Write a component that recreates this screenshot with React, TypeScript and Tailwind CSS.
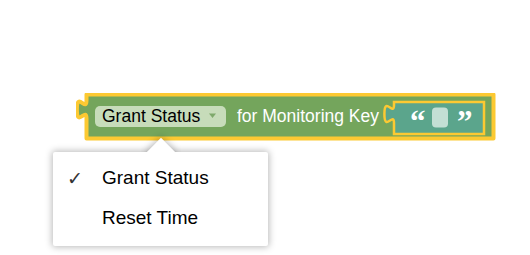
import React from 'react';

const GREEN = '#74a55c';
const TEAL = '#5ba58c';
const HIGHLIGHT = '#fcc932';

// output-tab going up, scaled 1.2 from blockly's default
const TAB_UP = 'c 0,-12 -9.6,9.6 -9.6,-9 s 9.6,3 9.6,-9';

const GrantStatusBlock: React.FC = () => (
  <svg width="424" height="50" viewBox="0 0 424 50" className="block">
    <path
      d={`M 10.5,1.5 H 417.5 V 45.5 H 10.5 V 25.5 ${TAB_UP} V 1.5 z`}
      fill={GREEN}
      stroke={HIGHLIGHT}
      strokeWidth="4"
      strokeLinejoin="round"
    />
    {/* dropdown field */}
    <rect x="19" y="13" width="131" height="21" rx="5" fill="#c7dcba" />
    <text x="26" y="29" fontSize="17.5" fill="#000" fontFamily='"Liberation Sans", Arial, sans-serif'>
      Grant Status
    </text>
    <polygon points="133,20.5 140,20.5 136.5,25" fill="#7ea96b" />
    <text x="161" y="29" fontSize="17.5" fill="#fff" fontFamily='"Liberation Sans", Arial, sans-serif'>
      for Monitoring Key
    </text>
    {/* text shadow block */}
    <path
      d={`M 318,9 H 408 V 41 H 318 V 30 ${TAB_UP} V 9 z`}
      fill={TEAL}
      stroke={HIGHLIGHT}
      strokeWidth="2.5"
    />
    <text x="334" y="39" fontSize="31" fontWeight="bold" fill="#fff" fontFamily='"Liberation Serif", "Times New Roman", serif'>
      “
    </text>
    <rect x="356" y="14.5" width="16" height="20" rx="4" fill="#c3dfd4" />
    <text x="381" y="39" fontSize="31" fontWeight="bold" fill="#fff" fontFamily='"Liberation Serif", "Times New Roman", serif'>
      ”
    </text>
  </svg>
);

const options = [
  { label: 'Grant Status', checked: true },
  { label: 'Reset Time', checked: false },
];

const DropdownMenu: React.FC = () => (
  <>
    <div className="absolute left-[53px] top-[152px] w-[215px] h-[94px] bg-white rounded-[2px] shadow-[0_0_7px_1px_rgba(0,0,0,0.28)] pt-[6px]">
      {options.map((opt) => (
        <div key={opt.label} className="h-[40px] flex items-center pl-[14px] text-[19px] text-black">
          <span className="w-[35px] text-[19px] text-[#333] font-['DejaVu_Sans',sans-serif]">
            {opt.checked ? '✓' : ''}
          </span>
          <span>{opt.label}</span>
        </div>
      ))}
    </div>
    {/* pointer of the menu, clipped to the part above the box */}
    <div className="absolute left-[141px] top-[128px] w-[40px] h-[24px] overflow-hidden">
      <div className="absolute left-[10px] top-[14px] w-[20px] h-[20px] bg-white rotate-45 shadow-[0_0_7px_1px_rgba(0,0,0,0.28)]" />
    </div>
  </>
);

export default function App() {
  return (
    <div className="relative w-[530px] h-[255px] bg-white overflow-hidden font-['Liberation_Sans',Arial,sans-serif]">
      <div className="pt-[93px] pl-[76px]">
        <GrantStatusBlock />
      </div>
      <DropdownMenu />
    </div>
  );
}
